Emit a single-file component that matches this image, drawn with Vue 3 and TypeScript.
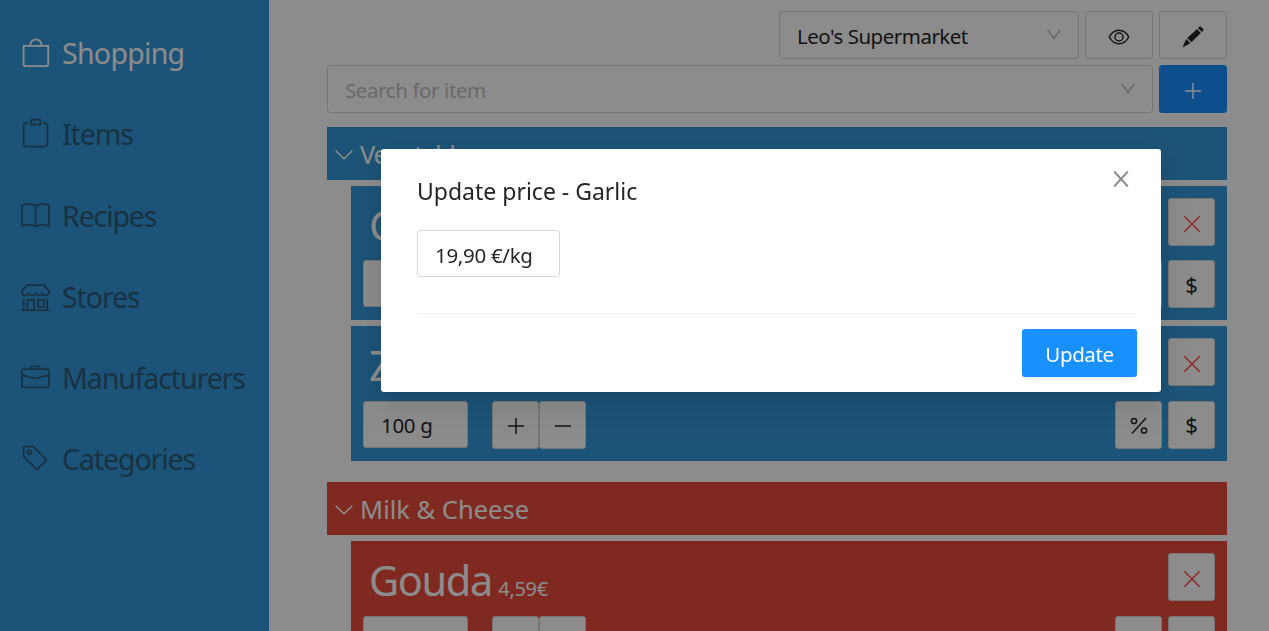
<script setup lang="ts">
interface NavItem {
  label: string
  icon: string
  active?: boolean
}
interface Product {
  name: string
  price: string
  amount: string
}
interface Category {
  name: string
  tone: 'blue' | 'red'
  products: Product[]
}

const nav: NavItem[] = [
  { label: 'Shopping', icon: 'M3.6 8.9H28.2V27a2.2 2.2 0 0 1-2.2 2.2H5.8A2.2 2.2 0 0 1 3.6 27zM10.2 8.6a5.7 6.3 0 0 1 11.4 0', active: true },
  { label: 'Items', icon: 'M7.7 5H6a2.4 2.4 0 0 0-2.4 2.4v18.8A2.4 2.4 0 0 0 6 28.6h18.900a2.400 2.400 0 0 0 2.400-2.400V7.400A2.400 2.400 0 0 0 24.900 5H23M12 1.700h7.600q1 0 1 1v3q0 1-1 1H12q-1 0-1-1v-3q0-1 1-1z' },
  { label: 'Recipes', icon: 'M15.500 6.200C12.500 3.400 6 3.400 1.900 5.400V26.200C6 24.300 12.500 24.300 15.500 26.500C18.500 24.300 25 24.300 28.900 26.200V5.400C25 3.400 18.500 3.400 15.500 6.200V26.500' },
  { label: 'Stores', icon: 'M7 4.200H24L28.900 10v1.500a3.400 3.400 0 0 1-6.750 0a3.400 3.400 0 0 1-6.750 0a3.400 3.400 0 0 1-6.750 0a3.400 3.400 0 0 1-6.750 0V10zM3.700 17.500V29.200M27.200 17.500V29.200M1.200 29.200H29.700M7.300 29.200V18.800h6.900v10.400M18.200 18.800h5.600v7h-5.600z' },
  { label: 'Manufacturers', icon: 'M3.700 7.200H27.100q1.800 0 1.800 1.800V23.600q0 1.800-1.800 1.800H3.700q-1.800 0-1.800-1.800V9q0-1.800 1.800-1.800zM11 7V5.600q0-1.200 1.200-1.200h6.600q1.200 0 1.200 1.200V7M2 13L14.600 16.300q.8.200 1.600 0L28.900 13' },
  { label: 'Categories', icon: 'M4.600 3.700H13.600L25.700 15.800q1 1 0 2L17.800 25.900q-.9.900-1.800 0L3.600 13.500V4.700q0-1 1-1zM11.300 9.200a2 2 0 1 1-4 0a2 2 0 1 1 4 0' },
]

const categories: Category[] = [
  {
    name: 'Vegetables',
    tone: 'blue',
    products: [
      { name: 'Garlic', price: '19,90€', amount: '100 g' },
      { name: 'Zucchini', price: '2,49€', amount: '100 g' },
    ],
  },
  {
    name: 'Milk & Cheese',
    tone: 'red',
    products: [{ name: 'Gouda', price: '4,59€', amount: '400 g' }],
  },
]
</script>

<template>
  <div class="app">
    <nav class="side">
      <a v-for="n in nav" :key="n.label" class="nav-item" :class="{ active: n.active }">
        <svg class="nav-icon" viewBox="0 0 32 32"><path :d="n.icon" /></svg>
        <span>{{ n.label }}</span>
      </a>
    </nav>

    <main class="main">
      <div class="toolbar end">
        <div class="select store">
          <span>Leo's Supermarket</span>
          <svg class="arrow" viewBox="0 0 14 12"><path d="M.9 1L7 9.500L13.100 1" /></svg>
        </div>
        <button class="btn wide">
          <svg class="ic" viewBox="0 0 24 24">
            <path d="M2.300 12C7 3 17 3 21.700 12C17 21 7 21 2.300 12z" />
            <circle cx="12" cy="12" r="4" />
          </svg>
        </button>
        <button class="btn wide">
          <svg class="ic solid" viewBox="0 0 24 24">
            <path d="M17 3.100l1.300-1.300q.8-.7 1.600 0l2.300 2.300q.8.800 0 1.600l-1.400 1.400zM16.100 4l3.800 4L10.400 17.300L6.200 13.100zM5.200 14l4.200 4.300L1.400 22.600z" />
          </svg>
        </button>
      </div>
      <div class="toolbar">
        <div class="select search">
          <span>Search for item</span>
          <svg class="arrow" viewBox="0 0 14 12"><path d="M.9 1L7 9.500L13.100 1" /></svg>
        </div>
        <button class="btn wide primary">
          <svg class="ic" viewBox="0 0 24 24"><path d="M12 4v16M4 12h16" /></svg>
        </button>
      </div>

      <section v-for="c in categories" :key="c.name" class="category" :class="c.tone">
        <header class="cat-head">
          <svg class="chev" viewBox="0 0 18 10"><path d="M.7.800L9 8.800L17.300.800" /></svg>
          <span>{{ c.name }}</span>
        </header>
        <article v-for="p in c.products" :key="p.name" class="card">
          <div class="line">
            <div class="name">{{ p.name }}<small>{{ p.price }}</small></div>
            <button class="btn danger">
              <svg class="ic" viewBox="0 0 24 24"><path d="M4.300 4.300l15.400 15.400M19.700 4.300L4.300 19.700" /></svg>
            </button>
          </div>
          <div class="line">
            <div class="amount">{{ p.amount }}</div>
            <div class="group">
              <button class="btn"><svg class="ic" viewBox="0 0 24 24"><path d="M12 4v16M4 12h16" /></svg></button>
              <button class="btn"><svg class="ic" viewBox="0 0 24 24"><path d="M4 12h16" /></svg></button>
            </div>
            <div class="right">
              <button class="btn">
                <svg class="ic" viewBox="0 0 24 24">
                  <circle cx="7" cy="7" r="2.600" /><circle cx="17" cy="16.500" r="2.600" /><path d="M19 4L5 19.500" />
                </svg>
              </button>
              <button class="btn dollar">$</button>
            </div>
          </div>
        </article>
      </section>
    </main>

    <div class="mask"></div>
    <div class="modal" role="dialog">
      <svg class="close" viewBox="0 0 16 18"><path d="M1.200 1.500L14.800 16.500M14.800 1.500L1.200 16.500" /></svg>
      <h2 class="title">Update price - Garlic</h2>
      <div class="price">19,90 €/kg</div>
      <footer class="foot"><button class="update">Update</button></footer>
    </div>
  </div>
</template>

<style>
html,
body {
  margin: 0;
  overflow: hidden;
}
</style>

<style scoped>
.app {
  width: 100vw;
  height: 100vh;
  display: flex;
  overflow: hidden;
  background: #fff;
  color: #262626;
  font-family: 'Noto Sans', 'Open Sans', sans-serif;
  box-sizing: border-box;
}
.app * {
  box-sizing: border-box;
}
.side {
  flex: 0 0 269px;
  padding-top: 12.500px;
  background: #3498db;
}
.nav-item {
  display: flex;
  align-items: center;
  height: 81.250px;
  padding-left: 20px;
  gap: 10px;
  color: #2f5c79;
  font-size: 28.500px;
  letter-spacing: -1.1px;
  white-space: nowrap;
}
.nav-item.active {
  color: #fff;
  letter-spacing: -0.7px;
}
.nav-icon {
  width: 32px;
  height: 32px;
}
svg {
  display: block;
  fill: none;
  stroke: currentColor;
  stroke-width: 1.500;
}
.nav-icon {
  stroke-width: 1.800;
}
.main {
  width: 900px;
  margin-left: 58px;
  padding-top: 11px;
}
.toolbar {
  display: flex;
  gap: 6px;
  margin-bottom: 6px;
}
.toolbar.end {
  justify-content: flex-end;
}
.select {
  display: flex;
  align-items: center;
  justify-content: space-between;
  height: 48px;
  padding: 0 17px;
  border: 1px solid #d9d9d9;
  border-radius: 3px;
  font-size: 20.500px;
}
.store {
  width: 300px;
}
.store span {
  padding-top: 2px;
  letter-spacing: -0.5px;
}
.search {
  flex: 1;
  color: #bfbfbf;
}
.search span {
  padding-top: 2px;
  letter-spacing: -0.4px;
}
.arrow {
  width: 14px;
  height: 12px;
  color: #bfbfbf;
}
.btn {
  display: flex;
  align-items: center;
  justify-content: center;
  width: 47px;
  height: 48px;
  padding: 0;
  border: 1px solid #d9d9d9;
  border-radius: 3px;
  background: #fff;
  color: #262626;
  font: 20.500px 'Noto Sans', sans-serif;
}
.btn.wide {
  width: 68px;
}
.btn.primary {
  background: #1890ff;
  border-color: #1890ff;
  color: #fff;
}
.btn.danger {
  color: #ff4d4f;
}
.ic {
  flex: none;
  width: 24px;
  height: 24px;
  margin-top: 3px;
}
.group .ic,
.right .ic {
  margin-top: 2px;
}
.ic.solid {
  fill: currentColor;
  stroke: none;
}
.category {
  margin-top: 21.400px;
  color: #fff;
}
.toolbar + .category {
  margin-top: 14px;
}
.cat-head {
  display: flex;
  align-items: center;
  gap: 7.500px;
  height: 53px;
  padding: 2px 0 0 7.500px;
  background: #3498db;
  font-size: 25.500px;
}
.cat-head span {
  padding-bottom: 1px;
}
.blue .cat-head {
  letter-spacing: -1.3px;
}
.red .cat-head,
.red .card {
  background: #e74c3c;
}
.chev {
  width: 18px;
  height: 10px;
}
.card {
  display: flex;
  flex-direction: column;
  gap: 14.400px;
  height: 134.400px;
  margin: 6px 0 0 24px;
  padding: 12px;
  background: #3498db;
}
.line {
  display: flex;
  height: 48px;
}
.name {
  flex: 1;
  padding-left: 6px;
  font-size: 41.500px;
  line-height: 55px;
  letter-spacing: -1.4px;
  white-space: nowrap;
}
.name small {
  margin-left: 6.500px;
  font-size: 20px;
  letter-spacing: -0.3px;
}
.amount {
  width: 105px;
  height: 47px;
  padding-left: 17px;
  border: 1px solid #d9d9d9;
  border-radius: 3px;
  background: #fff;
  color: #262626;
  font-size: 20.500px;
  line-height: 47px;
  letter-spacing: -0.3px;
}
.group {
  display: flex;
  margin-left: 24px;
}
.right {
  display: flex;
  gap: 6px;
  margin-left: auto;
}
.dollar {
  padding-bottom: 1px;
  font-size: 22px;
}
.mask {
  position: fixed;
  inset: 0;
  background: rgba(0, 0, 0, 0.45);
}
.modal {
  position: fixed;
  left: 381px;
  top: 149px;
  width: 780px;
  height: 243px;
  padding: 24px 24px 15px 36px;
  display: flex;
  flex-direction: column;
  align-items: flex-start;
  border-radius: 3px;
  background: #fff;
  box-shadow: 0 4px 9px -6px rgba(0, 0, 0, 0.12), 0 9px 24px rgba(0, 0, 0, 0.08), 0 14px 42px 12px rgba(0, 0, 0, 0.05);
}
.close {
  position: absolute;
  top: 21px;
  right: 32px;
  width: 16px;
  height: 18px;
  color: #8c8c8c;
  stroke-width: 1.900;
}
.title {
  margin: 0;
  font-size: 23px;
  font-weight: 400;
  line-height: 36px;
}
.price {
  width: 143px;
  height: 47px;
  margin-top: 21px;
  padding-left: 17px;
  border: 1px solid #d9d9d9;
  border-radius: 3px;
  font-size: 20.500px;
  line-height: 48px;
  letter-spacing: -0.3px;
}
.foot {
  display: flex;
  justify-content: flex-end;
  align-self: stretch;
  margin-top: 36px;
  padding-top: 15px;
  border-top: 1px solid #f0f0f0;
}
.update {
  width: 115px;
  height: 48px;
  padding: 2px 0 0;
  border: 0;
  border-radius: 3px;
  background: #1890ff;
  box-shadow: 0 3px 0 rgba(0, 0, 0, 0.045);
  color: #fff;
  font: 20.500px 'Noto Sans', sans-serif;
  letter-spacing: -0.4px;
}
</style>
